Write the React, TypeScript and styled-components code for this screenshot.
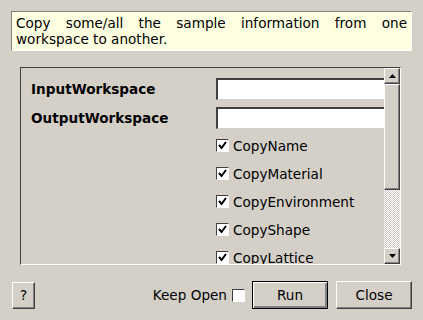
import React from "react";
import styled, { createGlobalStyle, css } from "styled-components";

const GlobalStyle = createGlobalStyle`
  html, body {
    margin: 0;
    padding: 0;
    background: #d4d0c8;
  }
  body {
    font-family: "DejaVu Sans", "Liberation Sans", sans-serif;
    font-size: 13.6px;
    color: #000;
  }
`;

const checkOptions = [
  "CopyName",
  "CopyMaterial",
  "CopyEnvironment",
  "CopyShape",
  "CopyLattice",
];

const sunken = css`
  border-top: 1px solid #808080;
  border-left: 1px solid #808080;
  border-right: 1px solid #ffffff;
  border-bottom: 1px solid #ffffff;
`;

const raised = css`
  border-top: 1px solid #ffffff;
  border-left: 1px solid #ffffff;
  border-right: 1px solid #404040;
  border-bottom: 1px solid #404040;
  box-shadow: inset -1px -1px 0 #808080;
`;

const Arrow = ({ up }: { up?: boolean }) => (
  <svg width="7" height="4" viewBox="0 0 7 4">
    <polygon points={up ? "3.5,0 7,4 0,4" : "0,0 7,0 3.5,4"} fill="#000" />
  </svg>
);

const CheckBox = ({ checked }: { checked?: boolean }) => (
  <Box>
    {checked && (
      <svg width="9" height="9" viewBox="0 0 9 9">
        <polyline
          points="1,4 3.5,7 8,1"
          fill="none"
          stroke="#000"
          strokeWidth="2"
        />
      </svg>
    )}
  </Box>
);

const App = () => (
  <>
    <GlobalStyle />
    <Dialog>
      <Info>
        <InfoText>
          Copy some/all the sample information from one workspace to another.
        </InfoText>
      </Info>

      <Frame>
        <Viewport>
          <Form>
            <Label>InputWorkspace</Label>
            <TextInput />
            <Label>OutputWorkspace</Label>
            <TextInput />
            {checkOptions.map((name) => (
              <React.Fragment key={name}>
                <span />
                <CheckRow>
                  <CheckBox checked />
                  {name}
                </CheckRow>
              </React.Fragment>
            ))}
          </Form>
        </Viewport>
        <ScrollBar>
          <ScrollButton>
            <Arrow up />
          </ScrollButton>
          <Thumb />
          <Track />
          <ScrollButton>
            <Arrow />
          </ScrollButton>
        </ScrollBar>
      </Frame>

      <Footer>
        <SmallButton>?</SmallButton>
        <Spacer />
        <KeepOpen>
          Keep Open
          <CheckBox />
        </KeepOpen>
        <Button $default>Run</Button>
        <Button>Close</Button>
      </Footer>
    </Dialog>
  </>
);

export default App;

const Dialog = styled.div`
  width: 423px;
  height: 320px;
  box-sizing: border-box;
  display: flex;
  flex-direction: column;
  padding: 11px 11px 0 11px;
`;

const Info = styled.div`
  ${sunken};
  background: #ffffe1;
  height: 40px;
  box-sizing: border-box;
  padding: 3px 4px 0 4px;
`;

const InfoText = styled.p`
  margin: 0;
  line-height: 16px;
  text-align: justify;
`;

const Frame = styled.div`
  ${sunken};
  border-top-color: #404040;
  border-left-color: #404040;
  margin: 16px 11px 0 9px;
  height: 196px;
  display: flex;
  overflow: hidden;
`;

const Viewport = styled.div`
  flex: 1;
  overflow: hidden;
  padding: 10px 0 0 10px;
`;

const Form = styled.div`
  display: grid;
  grid-template-columns: 185px 176px;
  row-gap: 7px;
  align-items: center;
`;

const Label = styled.span`
  font-weight: bold;
`;

const TextInput = styled.div`
  height: 22px;
  box-sizing: border-box;
  background: #fff;
  border-top: 2px solid #404040;
  border-left: 2px solid #404040;
  border-right: 1px solid #d4d0c8;
  border-bottom: 1px solid #d4d0c8;
`;

const CheckRow = styled.label`
  height: 21px;
  display: flex;
  align-items: center;
  gap: 4px;
  margin-top: -1px;
  margin-bottom: 1px;
`;

const Box = styled.span`
  width: 13px;
  height: 13px;
  flex: none;
  box-sizing: border-box;
  background: #fff;
  border-top: 1px solid #404040;
  border-left: 1px solid #404040;
  border-right: 1px solid #ffffff;
  border-bottom: 1px solid #ffffff;
  box-shadow: 1px 1px 0 #d4d0c8;
  display: inline-flex;
  align-items: center;
  justify-content: center;
`;

const ScrollBar = styled.div`
  width: 16px;
  display: flex;
  flex-direction: column;
`;

const ScrollButton = styled.div`
  ${raised};
  box-sizing: border-box;
  height: 16px;
  background: #d4d0c8;
  display: flex;
  align-items: center;
  justify-content: center;
`;

const Thumb = styled.div`
  ${raised};
  box-sizing: border-box;
  height: 106px;
  background: #d4d0c8;
`;

const Track = styled.div`
  flex: 1;
  background-color: #ffffff;
  background-image: repeating-conic-gradient(#d4d0c8 0 25%, #ffffff 0 50%);
  background-size: 2px 2px;
`;

const Footer = styled.div`
  display: flex;
  align-items: center;
  margin-top: 16px;
  margin-left: 1px;
  gap: 8px;
`;

const Spacer = styled.div`
  flex: 1;
`;

const buttonBase = css`
  box-sizing: border-box;
  background: #d4d0c8;
  font-family: "DejaVu Sans", "Liberation Sans", sans-serif;
  font-size: 13.6px;
  color: #000;
  display: flex;
  align-items: center;
  justify-content: center;
  padding: 0;
`;

const SmallButton = styled.button`
  ${buttonBase};
  ${raised};
  width: 23px;
  height: 27px;
`;

const Button = styled.button<{ $default?: boolean }>`
  ${buttonBase};
  ${raised};
  width: 76px;
  height: 28px;
  ${(p) =>
    p.$default &&
    css`
      border: 1px solid #000;
      box-shadow: inset 1px 1px 0 #fff, inset -2px -2px 0 #808080;
    `}
`;

const KeepOpen = styled.label`
  display: flex;
  align-items: center;
  gap: 5px;
  margin-right: -1px;
`;
